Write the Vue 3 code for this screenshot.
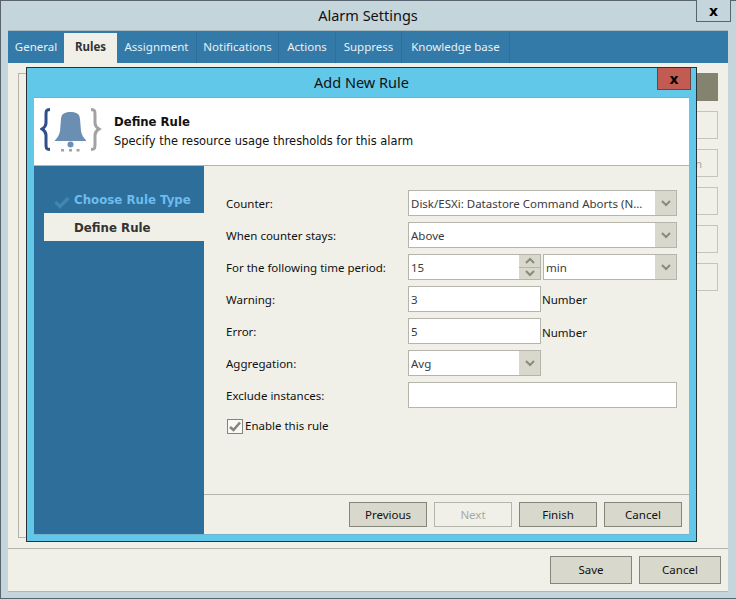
<script setup>
const tabs = [
  { name: 'General', width: 56 },
  { name: 'Rules', width: 53, active: true },
  { name: 'Assignment', width: 80, sep: true },
  { name: 'Notifications', width: 82, sep: true },
  { name: 'Actions', width: 57, sep: true },
  { name: 'Suppress', width: 66, sep: true },
  { name: 'Knowledge base', width: 108, sep: true }
]

const sideButtons = ['Add', 'Edit', 'Add Condition', 'Remove', 'Up', 'Down']
</script>

<template>
  <div class="window">
    <div class="titlebar">
      <span class="title">Alarm Settings</span>
      <button class="close">x</button>
    </div>

    <div class="tabs">
      <div
        v-for="tab in tabs"
        :key="tab.name"
        class="tab"
        :class="{ active: tab.active, sep: tab.sep }"
        :style="{ width: tab.width + 'px' }"
      >{{ tab.name }}</div>
    </div>

    <div class="page">
      <div class="page-main">
        <div class="group"></div>
        <div class="side-buttons">
          <div class="side-btn primary"></div>
          <div v-for="(b, i) in sideButtons.slice(1)" :key="b" class="side-btn" :class="{ labelled: i === 1 }">
            <span v-if="i === 1">{{ b }}</span>
          </div>
        </div>
      </div>
      <div class="page-footer">
        <button class="btn big">Save</button>
        <button class="btn big">Cancel</button>
      </div>
    </div>

    <!-- modal wizard -->
    <div class="dialog">
      <div class="dialog-title">
        <span class="dialog-name">Add New Rule</span>
        <button class="dialog-close">x</button>
      </div>
      <div class="dialog-body">
        <div class="header">
          <svg class="bell" width="62" height="46" viewBox="0 0 62 46">
            <path d="M10 3.5 C6 3.5 6 5 6 9 L6 17 C6 20 4.5 21.5 2 23 C4.5 24.5 6 26 6 29 L6 38 C6 42 6 43.5 10 43.5" fill="none" stroke="#2f4f8a" stroke-width="3" />
            <path d="M51 3.5 C55 3.5 55 5 55 9 L55 17 C55 20 56.500 21.500 59 23 C56.500 24.500 55 26 55 29 L55 38 C55 42 55 43.500 51 43.500" fill="none" stroke="#a2a2a6" stroke-width="3" />
            <path d="M30.500 6 C24 6 21.500 8 21 13 L20 25 C19.500 29 17 32 14.500 35 L46.500 35 C44 32 41.500 29 41 25 L40 13 C39.500 8 37 6 30.500 6 Z" fill="#6b8fb3" />
            <circle cx="30.500" cy="38.500" r="3" fill="#6b8fb3" />
            <rect x="21" y="43" width="3" height="2.500" fill="#a2a2a6" />
            <rect x="29" y="43" width="3" height="2.500" fill="#a2a2a6" />
            <rect x="36.500" y="43" width="3" height="2.500" fill="#a2a2a6" />
          </svg>
          <div class="header-text">
            <div class="header-title">Define Rule</div>
            <div class="header-sub">Specify the resource usage thresholds for this alarm</div>
          </div>
        </div>

        <div class="wizard">
          <div class="steps">
            <div class="step done">
              <svg class="step-check" width="16" height="14" viewBox="0 0 16 14">
                <path d="M1.500 7 L6 11.500 L14.500 3" fill="none" stroke="#3f86b3" stroke-width="3.400" />
              </svg>
              Choose Rule Type
            </div>
            <div class="step current">Define Rule</div>
          </div>

          <div class="content">
            <div class="form">
              <label>Counter:</label>
              <div class="field">
                <span class="value">Disk/ESXi: Datastore Command Aborts (N...</span>
                <span class="drop"><svg width="10" height="7" viewBox="0 0 10 7"><path d="M1 1 L5 5 L9 1" fill="none" stroke="#8a8a7a" stroke-width="2" /></svg></span>
              </div>

              <label>When counter stays:</label>
              <div class="field">
                <span class="value">Above</span>
                <span class="drop"><svg width="10" height="7" viewBox="0 0 10 7"><path d="M1 1 L5 5 L9 1" fill="none" stroke="#8a8a7a" stroke-width="2" /></svg></span>
              </div>

              <label>For the following time period:</label>
              <div class="pair">
                <div class="field narrow">
                  <span class="value">15</span>
                  <span class="spin">
                    <span class="spin-part"><svg width="10" height="7" viewBox="0 0 10 7"><path d="M1 6 L5 2 L9 6" fill="none" stroke="#8a8a7a" stroke-width="2" /></svg></span>
                    <span class="spin-part"><svg width="10" height="7" viewBox="0 0 10 7"><path d="M1 1 L5 5 L9 1" fill="none" stroke="#8a8a7a" stroke-width="2" /></svg></span>
                  </span>
                </div>
                <div class="field minutes">
                  <span class="value">min</span>
                  <span class="drop"><svg width="10" height="7" viewBox="0 0 10 7"><path d="M1 1 L5 5 L9 1" fill="none" stroke="#8a8a7a" stroke-width="2" /></svg></span>
                </div>
              </div>

              <label>Warning:</label>
              <div class="unit-row">
                <div class="field narrow"><span class="value">3</span></div>
                <span class="unit">Number</span>
              </div>

              <label>Error:</label>
              <div class="unit-row">
                <div class="field narrow"><span class="value">5</span></div>
                <span class="unit low">Number</span>
              </div>

              <label>Aggregation:</label>
              <div class="field narrow">
                <span class="value">Avg</span>
                <span class="drop"><svg width="10" height="7" viewBox="0 0 10 7"><path d="M1 1 L5 5 L9 1" fill="none" stroke="#8a8a7a" stroke-width="2" /></svg></span>
              </div>

              <label>Exclude instances:</label>
              <div class="field"></div>
            </div>

            <div class="enable">
              <span class="checkbox">
                <svg width="14" height="13" viewBox="0 0 14 13"><path d="M2 7 L5.500 10 L12 2.500" fill="none" stroke="#85857d" stroke-width="2.600" /></svg>
              </span>
              <span class="enable-text">Enable this rule</span>
            </div>

            <div class="wizard-footer">
              <button class="btn">Previous</button>
              <button class="btn disabled">Next</button>
              <button class="btn">Finish</button>
              <button class="btn">Cancel</button>
            </div>
          </div>
        </div>
      </div>
    </div>
  </div>
</template>

<style>
html,
body {
  margin: 0;
  background: #c4d5dc;
}
</style>

<style scoped>
.window {
  position: relative;
  width: 736px;
  height: 599px;
  box-sizing: border-box;
  display: flex;
  flex-direction: column;
  padding: 0 8px 6px 7px;
  border: 1px solid #5a6470;
  border-right: none;
  background: #c4d5dc;
  font-family: "Noto Sans", "DejaVu Sans", sans-serif;
  font-size: 11.5px;
  color: #111;
}

.titlebar {
  height: 30px;
  box-sizing: border-box;
  display: flex;
  align-items: center;
  justify-content: center;
  padding-bottom: 2px;
  border-bottom: 1px solid #a8b8bf;
}

.title {
  font-size: 14.5px;
}

.close {
  position: absolute;
  top: -1px;
  left: 695px;
  width: 35px;
  height: 22px;
  padding: 0;
  border: 1px solid #5a6470;
  border-top: none;
  background: #c4d5dc;
  font-family: "DejaVu Sans", sans-serif;
  font-size: 14px;
  font-weight: bold;
  color: #000;
}

.tabs {
  height: 32px;
  display: flex;
  align-items: flex-end;
  background: #337aa8;
}

.tab {
  height: 30px;
  box-sizing: border-box;
  display: flex;
  align-items: center;
  justify-content: center;
  padding-bottom: 4px;
  color: #e9f1f5;
}

.tab.sep {
  border-right: 1px solid #2d6e9b;
}

.tab.active {
  background: #f0f0e8;
  color: #333;
  font-weight: 700;
}

.page {
  flex: 1;
  display: flex;
  flex-direction: column;
  background: #f0f0e8;
  border-bottom: 1px solid #b5b5ab;
}

.page-main {
  flex: 1;
  display: flex;
  gap: 8px;
  padding: 10px;
  border-bottom: 1px solid #b5b5ab;
}

.group {
  flex: 1;
  border: 1px solid #b5b5ab;
}

.side-buttons {
  width: 90px;
  display: flex;
  flex-direction: column;
  gap: 10px;
}

.side-btn {
  height: 28px;
  box-sizing: border-box;
  border: 1px solid #c4c4ba;
  display: flex;
  align-items: center;
  justify-content: flex-end;
  padding-right: 15px;
  color: #a8a8a0;
  white-space: nowrap;
}

.side-btn.primary {
  background: #83836f;
  border-color: #83836f;
}

.page-footer {
  height: 42px;
  box-sizing: border-box;
  display: flex;
  justify-content: flex-end;
  gap: 7px;
  padding: 7px 7px 0 0;
}

.btn {
  width: 78px;
  height: 25px;
  padding: 0;
  border: 1px solid #85857a;
  background: #d8d8cc;
  font-family: inherit;
  font-size: 11.5px;
  color: #111;
}

.btn.big {
  width: 82px;
  height: 28px;
  padding-bottom: 2px;
}

.btn.disabled {
  background: #f0f0e8;
  border-color: #b5b5ab;
  color: #a8a8a0;
}

.dialog {
  position: absolute;
  left: 25px;
  top: 66px;
  width: 671px;
  height: 475px;
  box-sizing: border-box;
  display: flex;
  flex-direction: column;
  padding: 0 7px 6px;
  border: 1px solid #2a3038;
  background: #62c8ea;
}

.dialog-title {
  height: 30px;
  flex: none;
  display: flex;
  align-items: center;
  justify-content: center;
  box-sizing: border-box;
  padding-bottom: 2px;
  border-bottom: 1px solid #6fb4cf;
}

.dialog-name {
  font-size: 14.5px;
}

.dialog-close {
  position: absolute;
  top: 0;
  left: 630px;
  width: 34px;
  height: 22px;
  padding: 0;
  border: 1px solid #6b4340;
  border-top: none;
  background: #c25b52;
  font-family: "DejaVu Sans", sans-serif;
  font-size: 14px;
  font-weight: bold;
  color: #000;
}

.dialog-body {
  flex: 1;
  display: flex;
  flex-direction: column;
  border-bottom: 1px solid #6fb4cf;
  background: #f0f0e8;
}

.header {
  height: 68px;
  flex: none;
  box-sizing: border-box;
  display: flex;
  background: #fff;
  border-bottom: 1px solid #b5b5ab;
  padding: 8px 0 0 6px;
}

.bell {
  flex: none;
}

.header-text {
  margin-left: 12px;
  font-family: "DejaVu Sans", sans-serif;
  font-size: 11.45px;
  color: #111;
}

.header-title {
  font-size: 11.7px;
  font-weight: bold;
  line-height: 16px;
  margin-top: 8px;
}

.header-sub {
  line-height: 16px;
  margin-top: 3px;
}

.wizard {
  flex: 1;
  display: flex;
  min-height: 0;
}

.steps {
  width: 170px;
  flex: none;
  box-sizing: border-box;
  padding: 19px 0 0 10px;
  background: #2d6e9b;
  font-family: "DejaVu Sans", sans-serif;
  font-size: 11.8px;
  font-weight: bold;
}

.step {
  position: relative;
  height: 28px;
  line-height: 30px;
  padding-left: 30px;
}

.step.done {
  color: #6cbcee;
}

.step-check {
  position: absolute;
  left: 10px;
  top: 10px;
}

.step.current {
  background: #f0f0e8;
  color: #333;
}

.content {
  flex: 1;
  display: flex;
  flex-direction: column;
  min-width: 0;
}

.form {
  display: grid;
  grid-template-columns: 182px 269px;
  grid-auto-rows: 26px;
  row-gap: 6px;
  padding: 24px 0 0 22px;
  align-items: center;
}

.field {
  height: 26px;
  box-sizing: border-box;
  display: flex;
  align-items: stretch;
  border: 1px solid #b5b5ab;
  background: #fff;
  color: #3a3a3a;
}

.field.narrow {
  width: 133px;
}

.field.minutes {
  width: 134px;
}

.value {
  flex: 1;
  min-width: 0;
  display: flex;
  align-items: center;
  padding-left: 2px;
  white-space: nowrap;
  overflow: hidden;
}

.drop {
  width: 21px;
  display: flex;
  align-items: center;
  justify-content: center;
  background: #d8d8cc;
}

.spin {
  width: 21px;
  display: flex;
  flex-direction: column;
  background: #d8d8cc;
}

.spin-part {
  flex: 1;
  display: flex;
  align-items: center;
  justify-content: center;
}

.spin-part:first-child {
  border-bottom: 1px solid #b5b5ab;
}

.pair {
  display: flex;
  gap: 2px;
}

.unit-row {
  display: flex;
  align-items: center;
  gap: 1px;
}

.unit.low {
  margin-top: 3px;
}

.enable {
  display: flex;
  align-items: center;
  gap: 2px;
  margin: 11px 0 0 23px;
}

.enable-text {
  margin-top: -3px;
}

.checkbox {
  width: 16px;
  height: 15px;
  box-sizing: border-box;
  display: flex;
  align-items: center;
  justify-content: center;
  border: 1px solid #85857d;
  background: #f8f8f4;
}

.wizard-footer {
  margin-top: auto;
  height: 40px;
  box-sizing: border-box;
  display: flex;
  justify-content: flex-end;
  gap: 7px;
  padding: 7px 7px 0 0;
  border-top: 1px solid #b5b5ab;
}
</style>
